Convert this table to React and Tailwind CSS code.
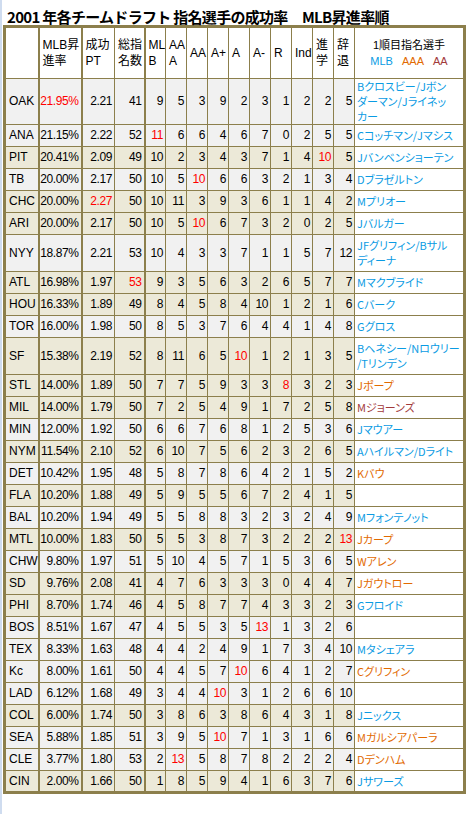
import React from 'react';

const BLUE = 'text-[#0a9be3]';
const ORANGE = 'text-[#e26a00]';
const BROWN = 'text-[#a23a3a]';

// team, rate, pt, total, MLB..辞退 (10), names, name colour, row bg ('g' gray / 'b' beige)
// a value ending in * is drawn in red
const ROWS = [
  ['OAK', '21.95%*', '2.21', '41', '9', '5', '3', '9', '2', '3', '1', '2', '2', '5', ['Bクロスビー/Jボン', 'ダーマン/Jライネッ', 'カー'], BLUE, 'g'],
  ['ANA', '21.15%', '2.22', '52', '11*', '6', '6', '4', '6', '7', '0', '2', '5', '5', ['Cコッチマン/Jマシス'], BLUE, 'g'],
  ['PIT', '20.41%', '2.09', '49', '10', '2', '3', '4', '3', '7', '1', '4', '10*', '5', ['Jバンベンショーテン'], BLUE, 'b'],
  ['TB', '20.00%', '2.17', '50', '10', '5', '10*', '6', '6', '3', '2', '1', '3', '4', ['Dブラゼルトン'], BLUE, 'g'],
  ['CHC', '20.00%', '2.27*', '50', '10', '11', '3', '9', '3', '6', '1', '1', '4', '2', ['Mプリオー'], BLUE, 'b'],
  ['ARI', '20.00%', '2.17', '50', '10', '5', '10*', '6', '7', '3', '2', '0', '2', '5', ['Jバルガー'], BLUE, 'b'],
  ['NYY', '18.87%', '2.21', '53', '10', '4', '3', '3', '7', '1', '1', '5', '7', '12', ['JFグリフィン/Bサル', 'ディーナ'], BLUE, 'g'],
  ['ATL', '16.98%', '1.97', '53*', '9', '3', '5', '6', '3', '2', '6', '5', '7', '7', ['Mマクブライド'], BLUE, 'b'],
  ['HOU', '16.33%', '1.89', '49', '8', '4', '5', '8', '4', '10', '1', '2', '1', '6', ['Cバーク'], BLUE, 'b'],
  ['TOR', '16.00%', '1.98', '50', '8', '5', '3', '7', '6', '4', '4', '1', '4', '8', ['Gグロス'], BLUE, 'g'],
  ['SF', '15.38%', '2.19', '52', '8', '11', '6', '5', '10*', '1', '2', '1', '3', '5', ['Bヘネシー/Nロウリー', '/Tリンデン'], BLUE, 'b'],
  ['STL', '14.00%', '1.89', '50', '7', '7', '5', '9', '3', '3', '8*', '3', '2', '3', ['Jポープ'], ORANGE, 'b'],
  ['MIL', '14.00%', '1.79', '50', '7', '2', '5', '4', '9', '1', '7', '2', '5', '8', ['Mジョーンズ'], BROWN, 'b'],
  ['MIN', '12.00%', '1.92', '50', '6', '6', '7', '6', '8', '1', '2', '5', '3', '6', ['Jマウアー'], BLUE, 'g'],
  ['NYM', '11.54%', '2.10', '52', '6', '10', '7', '5', '6', '2', '3', '2', '6', '5', ['Aハイルマン/Dライト'], BLUE, 'b'],
  ['DET', '10.42%', '1.95', '48', '5', '8', '7', '8', '6', '4', '2', '1', '5', '2', ['Kバウ'], ORANGE, 'g'],
  ['FLA', '10.20%', '1.88', '49', '5', '9', '5', '5', '6', '7', '2', '4', '1', '5', [], BLUE, 'b'],
  ['BAL', '10.20%', '1.94', '49', '5', '5', '8', '8', '3', '2', '3', '2', '4', '9', ['Mフォンテノット'], BLUE, 'g'],
  ['MTL', '10.00%', '1.83', '50', '5', '5', '3', '8', '7', '3', '2', '2', '2', '13*', ['Jカープ'], ORANGE, 'b'],
  ['CHW', '9.80%', '1.97', '51', '5', '10', '4', '5', '7', '1', '5', '3', '6', '5', ['Wアレン'], ORANGE, 'g'],
  ['SD', '9.76%', '2.08', '41', '4', '7', '6', '3', '3', '3', '0', '4', '4', '7', ['Jガウトロー'], ORANGE, 'b'],
  ['PHI', '8.70%', '1.74', '46', '4', '5', '8', '7', '7', '4', '3', '3', '2', '3', ['Gフロイド'], BLUE, 'b'],
  ['BOS', '8.51%', '1.67', '47', '4', '5', '5', '3', '5', '13*', '1', '3', '2', '6', [], BLUE, 'g'],
  ['TEX', '8.33%', '1.63', '48', '4', '4', '2', '4', '9', '1', '7', '3', '4', '10', ['Mタシェアラ'], BLUE, 'g'],
  ['Kc', '8.00%', '1.61', '50', '4', '4', '5', '7', '10*', '6', '4', '1', '2', '7', ['Cグリフィン'], ORANGE, 'g'],
  ['LAD', '6.12%', '1.68', '49', '3', '4', '4', '10*', '3', '1', '2', '6', '6', '10', [], BLUE, 'g'],
  ['COL', '6.00%', '1.74', '50', '3', '8', '6', '3', '8', '6', '4', '3', '1', '8', ['Jニックス'], BLUE, 'b'],
  ['SEA', '5.88%', '1.85', '51', '3', '9', '5', '10*', '7', '1', '3', '1', '6', '6', ['Mガルシアパーラ'], ORANGE, 'g'],
  ['CLE', '3.77%', '1.80', '53', '2', '13*', '5', '8', '7', '8', '2', '2', '2', '4', ['Dデンハム'], ORANGE, 'g'],
  ['CIN', '2.00%', '1.66', '50', '1', '8', '5', '9', '4', '1', '6', '3', '7', '6', ['Jサワーズ'], BLUE, 'b'],
];

const HEAD = [
  ['MLB昇', '進率'],
  ['成功', 'PT'],
  ['総指', '名数'],
  ['ML', 'B'],
  ['AA', 'A'],
  ['AA'],
  ['A+'],
  ['A'],
  ['A-'],
  ['R'],
  ['Ind'],
  ['進', '学'],
  ['辞', '退'],
];

const WIDTHS = [34, 43, 33, 30, 21, 21, 21, 21, 21, 21, 21, 21, 21, 21, 110];

// thick rule after team, rate and total columns
const thick = (i) => (i === 0 || i === 1 || i === 3 ? 'border-r-2' : '');

const cellBase = 'border border-[#8c7f4c] align-middle p-0';

function Num({ v }) {
  const red = v.endsWith('*');
  return <span className={red ? 'text-[#ff0000]' : 'text-black'}>{red ? v.slice(0, -1) : v}</span>;
}

export default function App() {
  return (
    <div className="w-[471px] h-[814px] bg-white border-l-2 border-[#cfdcef] font-['Liberation_Sans','Noto_Sans_CJK_JP',sans-serif] text-[12px] leading-[15px] text-black">
      <div className="pl-[5px] pt-[8px] h-[25px] text-[15px] leading-[17px] font-bold font-['Noto_Sans_CJK_JP',sans-serif] whitespace-nowrap tracking-[-0.7px]">
        2001 年各チームドラフト 指名選手の成功率　MLB昇進率順
      </div>
      <table className="ml-[1px] w-[462px] table-fixed border-collapse border-[3px] border-[#8c7f4c]">
        <colgroup>
          {WIDTHS.map((w, i) => (
            <col key={i} style={{ width: w }} />
          ))}
        </colgroup>
        <thead>
          <tr className="h-[52px] bg-white">
            <th className={`${cellBase} ${thick(0)}`} />
            {HEAD.map((h, i) => (
              <th key={i} className={`${cellBase} ${thick(i + 1)} text-left font-normal pl-[3px] leading-[16px]`}>
                {h.map((t, j) => (
                  <div key={j}>{t}</div>
                ))}
              </th>
            ))}
            <th className={`${cellBase} text-center font-normal text-[11px] leading-[16px]`}>
              <div className="[font-feature-settings:'palt']">1順目指名選手</div>
              <div className="flex justify-center gap-[9px] text-[11px]">
                <span className={BLUE}>MLB</span>
                <span className={ORANGE}>AAA</span>
                <span className={BROWN}>AA</span>
              </div>
            </th>
          </tr>
        </thead>
        <tbody>
          {ROWS.map((r) => {
            const names = r[14];
            const lines = names.length;
            const h = lines === 3 ? 'h-[46px]' : lines === 2 ? 'h-[37px]' : 'h-[22px]';
            const bg = r[16] === 'b' ? 'bg-[#ece9d8]' : 'bg-[#f1f1f1]';
            return (
              <tr key={r[0]} className={`${h} ${bg}`}>
                <td className={`${cellBase} ${thick(0)} pl-[3px] text-left`}>{r[0]}</td>
                {r.slice(1, 14).map((v, i) => (
                  <td key={i} className={`${cellBase} ${thick(i + 1)} pr-[2px] text-right tracking-[-0.4px]`}>
                    <Num v={v} />
                  </td>
                ))}
                <td className={`${cellBase} bg-white pl-[2px] text-left text-[11px] leading-[15px] font-['Noto_Sans_CJK_JP',sans-serif] [font-feature-settings:'palt'] ${r[15]}`}>
                  {names.map((n, j) => (
                    <div key={j} className="whitespace-nowrap">{n}</div>
                  ))}
                </td>
              </tr>
            );
          })}
        </tbody>
      </table>
    </div>
  );
}
